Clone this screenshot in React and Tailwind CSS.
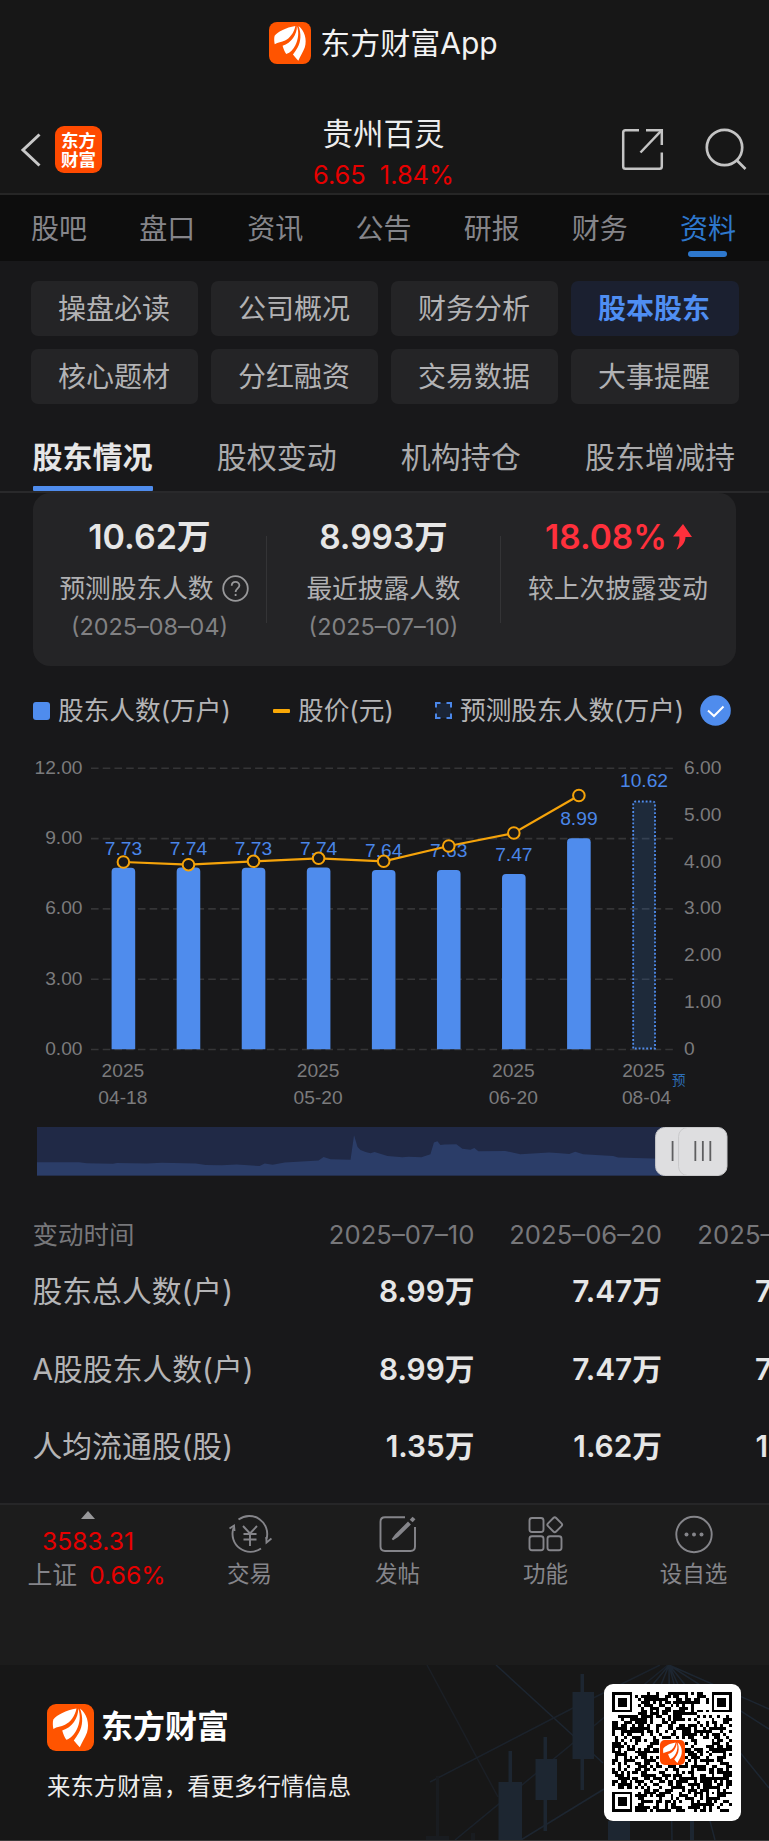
import React from "react";

const tabs = ["股吧", "盘口", "资讯", "公告", "研报", "财务", "资料"];
const chips = ["操盘必读", "公司概况", "财务分析", "股本股东", "核心题材", "分红融资", "交易数据", "大事提醒"];
const subTabs = ["股东情况", "股权变动", "机构持仓", "股东增减持"];

const bars = [
  { label: "7.73", top: 867.7, price: 862, day: ["2025", "04-18"] },
  { label: "7.74", top: 867.5, price: 864.7 },
  { label: "7.73", top: 867.7, price: 861.3 },
  { label: "7.74", top: 867.5, price: 858.3, day: ["2025", "05-20"] },
  { label: "7.64", top: 870, price: 861.3 },
  { label: "7.63", top: 870, price: 846 },
  { label: "7.47", top: 874, price: 833, day: ["2025", "06-20"] },
  { label: "8.99", top: 838.2, price: 795.5 },
];
const barX = (i) => 123.4 + i * 65.07;

const rows = [
  { name: "股东总人数(户)", values: ["8.99万", "7.47万", "7.63万"] },
  { name: "A股股东人数(户)", values: ["8.99万", "7.47万", "7.63万"] },
  { name: "人均流通股(股)", values: ["1.35万", "1.62万", "1.59万"] },
];

function Logo({ className, bg = "#ff5400" }) {
  return (
    <svg viewBox="0 0 47 47" className={className}>
      <rect width="47" height="47" rx="9" fill={bg} />
      <path d="M29.500 4.500C19 6 10 11 6.300 15.500C5.500 18.500 5.800 22 6.400 25C10 22.600 14 22.800 18 20.800C23.500 18 28 12 29.500 4.500Z" fill="#fff" />
      <path d="M31.200 4.500C31.500 14 25 23.500 15.200 26.500C16.200 30 17.500 33 19.300 35.800C24 34.300 27 30.500 29.500 26C33 19.500 33.800 11 31.200 4.500Z" fill="#fff" />
      <path d="M33 4.500C36.300 13 35.800 22 32 28.500C30.300 31.500 28.500 34 26.800 36.500C28.500 38.500 30.500 41 32.800 43.300C34.500 39 38 34 40 28.500C43 19.500 39.500 9 33 4.500Z" fill="#fff" />
    </svg>
  );
}

function Header() {
  return (
    <header className="border-b-2 border-[#262626] bg-[#171717]">
      <div className="flex h-[86px] items-center justify-center gap-[9px] pr-[2px] text-[30px] leading-none text-[#f2f2f2]">
        <Logo className="h-[42px] w-[42px]" />
        <span>东方财富App</span>
      </div>
      <div className="flex h-[107px] items-start justify-between pl-[20px] pr-[22px] pt-[40px]">
        <div className="flex w-[134px] gap-[14px]">
          <svg className="mt-[7px] h-[34px] w-[21px]" viewBox="0 0 21 34" fill="none" stroke="#c8c8c8" strokeWidth="3">
            <path d="M19.500 1.500L3 17L19.500 32.500" />
          </svg>
          <div className="flex h-[47px] w-[47px] flex-col items-center justify-center rounded-[9px] bg-[#ff4a00] text-[17.500px] font-bold leading-[19px] text-white">
            <span>东方</span>
            <span>财富</span>
          </div>
        </div>
        <div className="-mt-[8px] flex flex-col items-center">
          <div className="text-[30.500px] leading-[32px] text-[#ededed]">贵州百灵</div>
          <div className="mt-[9px] flex gap-[14px] text-[25.400px] leading-[32px] text-[#e60000]">
            <span>6.65</span>
            <span>1.84%</span>
          </div>
        </div>
        <div className="flex w-[134px] justify-end gap-[41px] pt-[2px]">
          <svg className="h-[43px] w-[43px]" viewBox="0 0 43 43" fill="none" stroke="#c4c4c4" strokeWidth="2.500">
            <path d="M18 2.200H4.500Q2.200 2.200 2.200 4.500V38.500Q2.200 40.800 4.500 40.800H38.500Q40.800 40.800 40.800 38.500V24.500" />
            <path d="M25 2.200H40.800V17" />
            <path d="M40.800 2.200L19.500 24.500" />
          </svg>
          <svg className="h-[43px] w-[42px]" viewBox="0 0 42 43" fill="none" stroke="#c4c4c4" strokeWidth="2.700">
            <circle cx="19.500" cy="19.500" r="17.700" />
            <path d="M31.500 32L40.500 41" />
          </svg>
        </div>
      </div>
    </header>
  );
}

function Tabs() {
  return (
    <nav className="flex h-[66px] bg-[#0d0d0d] pl-[5px] pr-[7px]">
      {tabs.map((t, i) => (
        <div
          key={t}
          className={`flex flex-1 flex-col items-center pt-[17px] text-[28px] leading-[34px] ${i === 6 ? "text-[#2e78cd]" : "text-[#85858a]"}`}
        >
          {t}
          {i === 6 && <span className="mt-[5px] h-[6px] w-[39px] rounded-[3px] bg-[#2e78cd]" />}
        </div>
      ))}
    </nav>
  );
}

function Chips() {
  return (
    <div className="grid grid-cols-4 gap-x-[12.300px] gap-y-[13px] px-[30.500px] pt-[20px]">
      {chips.map((c) => (
        <div
          key={c}
          className={`flex h-[55px] items-center justify-center rounded-[7px] pr-[1px] text-[28px] leading-none ${
            c === "股本股东" ? "bg-[#1b2030] font-bold text-[#4f8ef2]" : "bg-[#242426] text-[#b2b2b4]"
          }`}
        >
          {c}
        </div>
      ))}
    </div>
  );
}

function SubTabs() {
  return (
    <div className="mt-[31.500px] flex h-[57px] justify-between border-b-2 border-[#29292b] pl-[32.500px] pr-[34px] text-[30px] leading-[42px]">
      {subTabs.map((t, i) => (
        <div key={t} className={`flex flex-col justify-between ${i === 0 ? "font-bold text-[#e6e6e6]" : "text-[#ababad]"}`}>
          <span>{t}</span>
          {i === 0 && <span className="h-[5px] rounded-[1px] bg-[#4f8ced]" />}
        </div>
      ))}
    </div>
  );
}

function Summary() {
  return (
    <section className="mx-[33px] flex h-[173px] rounded-[17px] bg-[#242426] pt-[22px] text-center">
      <div className="w-[233px]">
        <div className="text-[34px] font-semibold leading-[44px] text-[#e6e6e6]">10.62万</div>
        <div className="mt-[12px] flex items-center justify-center gap-[8px] whitespace-nowrap pl-[9px] text-[25.700px] leading-[36px] text-[#b0b0b2]">
          预测股东人数
          <svg className="h-[27px] w-[27px] shrink-0" viewBox="0 0 27 27" fill="none" stroke="#98989a" strokeWidth="1.800">
            <circle cx="13.500" cy="13.500" r="12.300" />
            <path d="M9.700 10.800C9.700 5.600 17.500 5.800 17.400 10.500C17.300 13.300 13.600 13.500 13.600 17" />
            <path d="M13.600 18.900V21" />
          </svg>
        </div>
        <div className="mt-[3px] text-[23.400px] leading-[34px] text-[#818183]">(2025–08–04)</div>
      </div>
      <div className="mt-[21px] h-[87px] w-px bg-[#343436]" />
      <div className="w-[233px]">
        <div className="text-[33.500px] font-semibold leading-[44px] text-[#e6e6e6]">8.993万</div>
        <div className="mt-[12px] text-[25.700px] leading-[36px] text-[#b0b0b2]">最近披露人数</div>
        <div className="mt-[3px] text-[23.400px] leading-[34px] text-[#818183]">(2025–07–10)</div>
      </div>
      <div className="mt-[21px] h-[87px] w-px bg-[#343436]" />
      <div className="flex-1">
        <div className="flex items-center justify-center gap-[6px] text-[33.500px] font-semibold leading-[44px] text-[#ff303c]">
          18.08%
          <svg className="h-[26px] w-[19px]" viewBox="0 0 19 26" fill="#ff303c">
            <path d="M10 0L19 13H12.500C12.500 18 9 23 3.500 25.800C6 21 7 17 6.300 12.500H0Z" />
          </svg>
        </div>
        <div className="mt-[12px] pr-[1px] text-[25.700px] leading-[36px] text-[#b0b0b2]">较上次披露变动</div>
      </div>
    </section>
  );
}

function Legend() {
  return (
    <div className="mt-[27px] flex h-[36px] items-center whitespace-nowrap pl-[33px] text-[25.700px] leading-[36px] text-[#b4b4b6]">
      <span className="mr-[8px] h-[18px] w-[17px] rounded-[3px] bg-[#4f8ced]" />
      <span className="w-[215px]">股东人数(万户)</span>
      <span className="mr-[8px] h-[4px] w-[17px] rounded-[1px] bg-[#f9a806]" />
      <span className="w-[137px]">股价(元)</span>
      <svg className="mr-[8px] h-[17px] w-[17px]" viewBox="0 0 17 17" fill="#1b2536">
        <rect x="1" y="1" width="15" height="15" />
        <path d="M1 5.500V1H5.500M11.500 1H16V5.500M16 11.500V16H11.500M5.500 16H1V11.500" fill="none" stroke="#4a86e8" strokeWidth="2" />
      </svg>
      <span className="w-[240px]">预测股东人数(万户)</span>
      <svg className="h-[31px] w-[31px]" viewBox="0 0 31 31" fill="none">
        <circle cx="15.500" cy="15.500" r="15.300" fill="#4f8ced" />
        <path d="M8 15.500L14 21L23.500 11.500" stroke="#fff" strokeWidth="2" />
      </svg>
    </div>
  );
}

function Chart() {
  return (
    <svg className="block h-[391px] w-[769px] font-['Liberation_Sans',sans-serif] text-[19.200px]" viewBox="0 729 769 391">
      {[768.3, 838.6, 908.9, 979.2, 1049.5].map((y) => (
        <line key={y} x1="91" x2="673" y1={y} y2={y} stroke="#353537" strokeWidth="1.600" strokeDasharray="7.600 4.120" />
      ))}
      <g fill="#7b7b7d">
        {["12.00", "9.00", "6.00", "3.00", "0.00"].map((t, i) => (
          <text key={t} x="82.500" y={773.8 + i * 70.3} textAnchor="end">{t}</text>
        ))}
        {["6.00", "5.00", "4.00", "3.00", "2.00", "1.00", "0"].map((t, i) => (
          <text key={t} x="684" y={773.8 + i * 46.87}>{t}</text>
        ))}
      </g>
      {bars.map((b, i) => (
        <path
          key={i}
          d={`M${barX(i) - 11.8} 1049.200V${b.top + 4}q0 -4 4 -4h15.600q4 0 4 4V1049.200Z`}
          fill="#4f8ced"
        />
      ))}
      <path d="M633.200 1048.500V804q0 -2.500 2.500 -2.500H652.500q2.500 0 2.500 2.500V1048.500Z" fill="#3572bd" fillOpacity="0.200" stroke="#4f8ced" strokeWidth="1.800" strokeDasharray="1.900 1.900" />
      <g fill="#4a86e8" textAnchor="middle">
        {bars.map((b, i) => (
          <text key={i} x={barX(i)} y={b.top - 12.8}>{b.label}</text>
        ))}
        <text x="644" y="787.200">10.62</text>
      </g>
      <polyline points={bars.map((b, i) => `${barX(i)},${b.price}`).join(" ")} fill="none" stroke="#f5a30a" strokeWidth="2.200" />
      {bars.map((b, i) => (
        <circle key={i} cx={barX(i)} cy={b.price} r="5.800" fill="#18181a" stroke="#f5a30a" strokeWidth="2" />
      ))}
      <g fill="#7b7b7d" textAnchor="middle">
        {bars.map((b, i) =>
          b.day ? (
            <React.Fragment key={i}>
              <text x={barX(i) - 0.5} y="1076.800">{b.day[0]}</text>
              <text x={barX(i) - 0.5} y="1104.200">{b.day[1]}</text>
            </React.Fragment>
          ) : null
        )}
        <text x="643.500" y="1076.800">2025</text>
        <text x="646.500" y="1104.200">08-04</text>
      </g>
      <text x="672" y="1085" fill="#2d6fb8" className="font-['Noto_Sans_CJK_SC',sans-serif] text-[13.500px]">预</text>
    </svg>
  );
}

function RangeSlider() {
  return (
    <svg className="ml-[37px] mt-[7px] block h-[49px] w-[691px]" viewBox="0 0 692 49" preserveAspectRatio="none">
      <rect width="660" height="48.500" fill="#202946" />
      <path
        d="M0 48.500V35.300L42 35.300L50 36.300L76 36.700L80 36L110 36.500L125 35.700L159 36.500L169 38L185 38.300L200 37.500L223 39L228 36.500L236 37.700L248 35.500L282 33.500L287 30L294 32.300L314 32.700L317.500 8.300L321 20L324 23L329 25L334 26.300L338 25L351 29L366 30.300L372 29.700L385 30.300L394 27.300L397.500 15.500L401 14.300L404 18L408 17.500L420 17.300L426 21.700L434 22.700L438 21L442 24.300L469 24L484 27.300L513 25.500L524 26.300L533 27L539 24.700L547 27.300L577 29L582 30.500L660 32.800V48.500Z"
        fill="#2b3d68"
      />
      <rect x="619.500" y="0.500" width="48" height="48" rx="9" fill="#dedee0" stroke="#c9c9cb" />
      <path d="M636.500 14V34" stroke="#5e5e60" strokeWidth="1.800" />
      <rect x="642.500" y="0.500" width="48.500" height="48" rx="9" fill="#dedee0" stroke="#c9c9cb" />
      <path d="M659.300 14V34M666.800 14V34M674.300 14V34" stroke="#5e5e60" strokeWidth="1.800" />
    </svg>
  );
}

const columnWidths = ["w-[188px]", "w-[187.500px]", "w-[183px]"];

function HolderTable() {
  return (
    <section className="mt-[38px] h-[289px] overflow-hidden pl-[32.500px]">
      <div className="flex h-[42px] items-center whitespace-nowrap text-[25.500px] leading-none text-[#77777a]">
        <span className="w-[254px] shrink-0">变动时间</span>
        {["2025–07–10", "2025–06–20", "2025–06–10"].map((d, j) => (
          <span key={d} className={`${columnWidths[j]} shrink-0 text-right text-[25.700px]`}>{d}</span>
        ))}
      </div>
      {rows.map((r, i) => (
        <div key={r.name} className={`flex h-[77.500px] items-center whitespace-nowrap leading-none ${i === 0 ? "-mt-[2px]" : ""}`}>
          <span className="w-[254px] shrink-0 text-[29.800px] text-[#b4b4b6]">{r.name}</span>
          {r.values.map((v, j) => (
            <span key={j} className={`${columnWidths[j]} shrink-0 text-right text-[29.800px] font-semibold text-[#e6e6e6]`}>{v}</span>
          ))}
        </div>
      ))}
    </section>
  );
}

const actions = [
  {
    name: "交易",
    icon: (
      <>
        <path d="M9.500 5.500A18 18 0 0 1 37.500 25M32 34.500A18 18 0 0 1 4.500 14" />
        <path d="M0.500 14.500L5 11.700L5.500 17M42.500 24.500L37.500 28.500L37.300 23" />
        <path d="M14 12L21 19.500L28 12M21 19.500V32M14.500 20H27.500M14.500 25.500H27.500" />
      </>
    ),
  },
  {
    name: "发帖",
    icon: (
      <>
        <path d="M28 3.200H8Q3.500 3.200 3.500 7.700V32.500Q3.500 37 8 37H33.500Q38 37 38 32.500V13" />
        <path d="M31 9L19 21L15.500 25.500L20.500 22.300L32.500 10.500Z" strokeWidth="2" fill="#85858a" />
        <path d="M34.200 7L37 4" strokeWidth="4" />
      </>
    ),
  },
  {
    name: "功能",
    icon: (
      <>
        <rect x="4.500" y="4" width="14" height="14" rx="2.500" />
        <rect x="4.500" y="22.300" width="14" height="14" rx="2.500" />
        <rect x="22.500" y="22.300" width="14" height="14" rx="2.500" />
        <rect x="24" y="5" width="11.500" height="11.500" rx="2" transform="rotate(45 29.750 10.750)" />
      </>
    ),
  },
  {
    name: "设自选",
    icon: (
      <>
        <circle cx="21" cy="20.500" r="17.700" />
        <g fill="#85858a" stroke="none">
          <circle cx="13.500" cy="20.500" r="2" />
          <circle cx="21" cy="20.500" r="2" />
          <circle cx="28.500" cy="20.500" r="2" />
        </g>
      </>
    ),
  },
];

function BottomBar() {
  return (
    <div className="flex h-[162px] border-t-2 border-[#262628] bg-[#1c1c1c]">
      <div className="flex w-[176px] flex-col items-center pt-[6px]">
        <svg className="h-[8px] w-[14px]" viewBox="0 0 14 8" fill="#98989a">
          <path d="M7 0L14 8H0Z" />
        </svg>
        <div className="mt-[5px] text-[24.700px] leading-[34px] text-[#e60000]">3583.31</div>
        <div className="flex gap-[12px] pl-[17px] text-[24.800px] leading-[34px] text-[#85858a]">
          <span>上证</span>
          <span className="text-[#e60000]">0.66%</span>
        </div>
      </div>
      <div className="flex flex-1">
        {actions.map((a) => (
          <div key={a.name} className="flex w-[148px] flex-col items-center pt-[9px] text-[22.500px] leading-[32px] text-[#85858a]">
            <svg className="h-[42px] w-[43px]" viewBox="0 0 43 42" fill="none" stroke="#85858a" strokeWidth="1.900">
              {a.icon}
            </svg>
            <span className="mt-[2px] pr-[1px]">{a.name}</span>
          </div>
        ))}
      </div>
    </div>
  );
}

const N = 41;
const inFinder = (x, y) => (x < 8 && y < 8) || (x > 32 && y < 8) || (x < 8 && y > 32);
const inAlign = (x, y) => x > 31 && x < 37 && y > 31 && y < 37;
const modules = (() => {
  let seed = 77123;
  let d = "";
  for (let y = 0; y < N; y++) {
    for (let x = 0; x < N; x++) {
      seed = (seed * 1103515245 + 12345) % 2147483648;
      if (inFinder(x, y) || inAlign(x, y)) continue;
      if (Math.abs(x - 20) < 5 && Math.abs(y - 20) < 5) continue;
      if (seed / 2147483648 < 0.52) d += `M${x} ${y}h1v1h-1z`;
    }
  }
  return d;
})();

function QrCode() {
  return (
    <div className="relative flex h-[137px] w-[137px] items-center justify-center rounded-[9px] bg-white">
      <svg className="h-[120px] w-[120px]" viewBox="0 0 41 41" shapeRendering="crispEdges">
        <path d={modules} />
        {[[0, 0], [34, 0], [0, 34]].map(([x, y]) => (
          <g key={`${x}-${y}`}>
            <rect x={x + 0.5} y={y + 0.5} width="6" height="6" fill="none" stroke="#000" />
            <rect x={x + 2} y={y + 2} width="3" height="3" />
          </g>
        ))}
        <rect x="32.500" y="32.500" width="4" height="4" fill="none" stroke="#000" />
        <rect x="34" y="34" width="1" height="1" />
      </svg>
      <Logo className="absolute left-[56px] top-[56px] h-[25px] w-[25px]" bg="#ff4a00" />
    </div>
  );
}

function Footer() {
  return (
    <footer className="relative flex h-[176px] items-start justify-between border-b border-[#3a3a3a] bg-[#171717] pl-[47px] pr-[28.500px]">
      <svg className="absolute left-0 top-0 h-[175px] w-[769px]" viewBox="0 1665 769 175" fill="none" stroke="#1d2631" strokeWidth="1.500">
        <path d="M427 1665L498 1797" stroke="#1b1f25" />
        <path d="M496 1665L603 1763" />
        <path d="M430 1782L573 1708L660 1665" stroke="#1b222b" />
        <path d="M455 1840L668 1665" stroke="#1b222b" />
        <path d="M521 1840L604 1789" />
        <path d="M669 1665L769 1709M669 1665L769 1729M669 1665L769 1788M669 1665L715 1840M669 1665L672 1840M669 1665V1700M669 1665L640 1700M669 1665L655 1700M669 1665L685 1700" />
        <g fill="#1d2631" stroke="none">
          <path d="M572.500 1692H594V1759H572.500ZM580.500 1674H584V1790H580.500Z" />
          <path d="M535.500 1759H557V1800H535.500ZM543.500 1737H547V1831H543.500Z" />
          <path d="M498.500 1782H522V1840H498.500ZM508.500 1751H512V1782H508.500Z" />
          <path d="M608 1821H630V1840H608ZM690 1821H694V1840H690Z" />
          <path d="M426 1836H449V1840H426ZM436 1776H439V1836H436ZM471 1833H475V1840H471Z" fill="#191c20" />
        </g>
      </svg>
      <div className="relative pt-[39px]">
        <div className="flex items-center gap-[7px] text-[32px] font-bold leading-none text-white">
          <Logo className="h-[47px] w-[47px]" />
          <span>东方财富</span>
        </div>
        <div className="mt-[19px] text-[23.400px] leading-[34px] text-[#ededed]">来东方财富，看更多行情信息</div>
      </div>
      <div className="relative pt-[19px]">
        <QrCode />
      </div>
    </footer>
  );
}

export default function App() {
  return (
    <div className="h-[1841px] w-[769px] overflow-hidden bg-[#18181a] font-['Inter','Noto_Sans_CJK_SC',sans-serif]">
      <Header />
      <Tabs />
      <Chips />
      <SubTabs />
      <Summary />
      <Legend />
      <Chart />
      <RangeSlider />
      <HolderTable />
      <BottomBar />
      <Footer />
    </div>
  );
}
